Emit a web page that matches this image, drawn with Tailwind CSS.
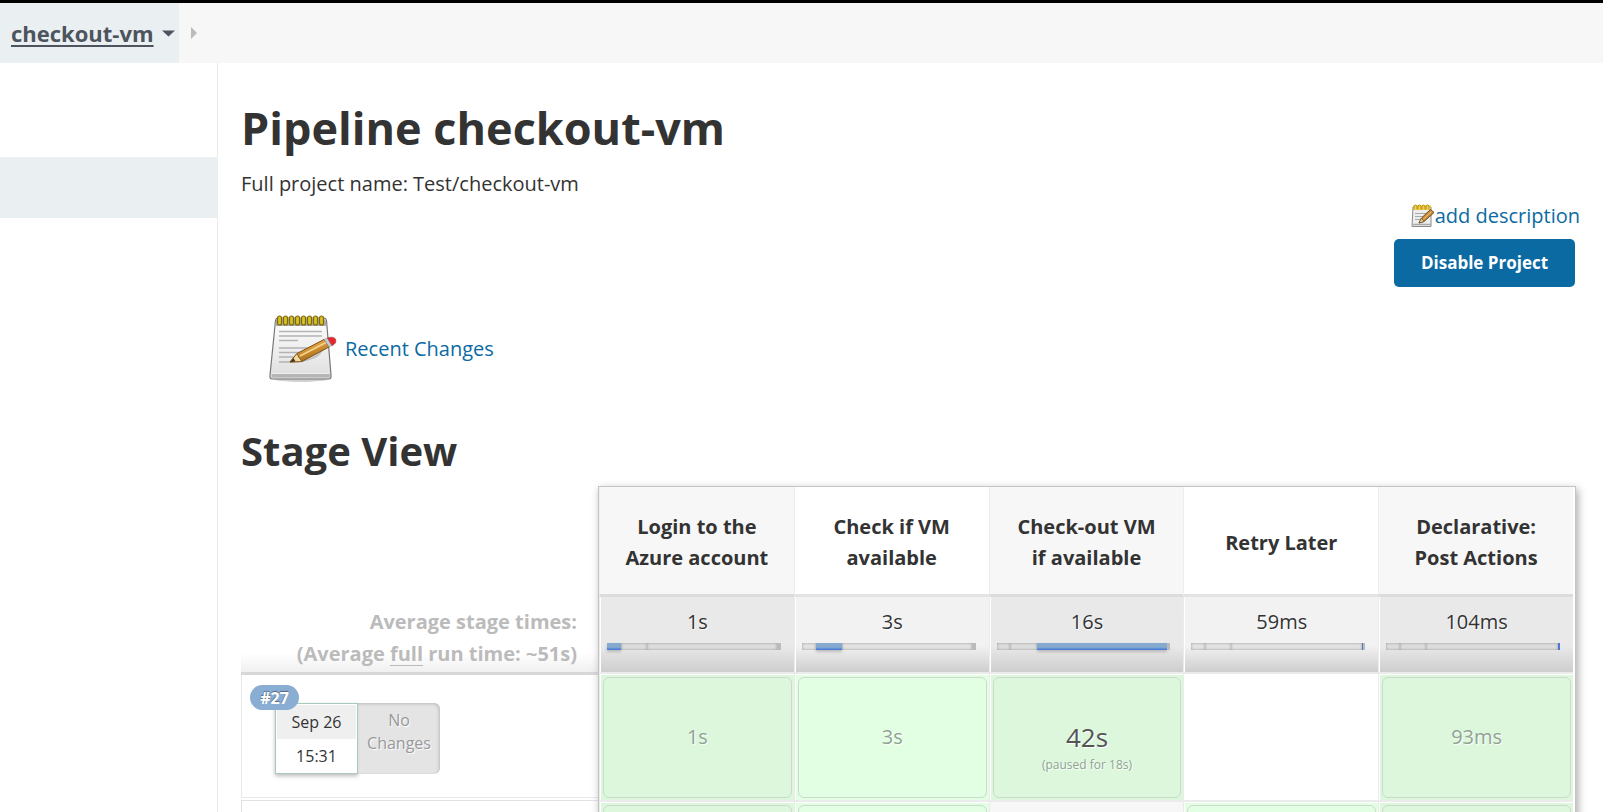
<!DOCTYPE html>
<html lang="en">
<head>
<meta charset="utf-8">
<title>checkout-vm</title>
<script src="https://cdn.jsdelivr.net/npm/@tailwindcss/browser@4"></script>
</head>
<body class="flex h-screen flex-col overflow-hidden bg-white font-['Segoe_UI','Open_Sans',sans-serif] text-[20px] text-[#333]">
<svg class="absolute size-0" aria-hidden="true">
  <defs>
    <linearGradient id="paper" x1="0" y1="0" x2="0" y2="1"><stop offset="0" stop-color="#fff"/><stop offset="1" stop-color="#dedede"/></linearGradient>
    <linearGradient id="wood" x1="0" y1="0" x2="0.5" y2="1"><stop offset="0" stop-color="#ecc06a"/><stop offset="0.5" stop-color="#d9993a"/><stop offset="1" stop-color="#9c6519"/></linearGradient>
    <symbol id="notepad" viewBox="0 0 68 68">
      <ellipse cx="32" cy="64" rx="27" ry="3" fill="#000" opacity=".18"/>
      <path d="M6.500 5.500Q7 3 9 3H55Q57 3 57.500 5.500L62 60Q62.500 64 60 64H3Q.5 64 1 60Z" fill="url(#paper)" stroke="#777" stroke-width="1.200"/>
      <path d="M7 5Q7 4 9 4H55Q57 4 57.500 11H6.500Z" fill="#aaa"/>
      <path d="M3 58H60.500L61 62.500H2.500Z" fill="#b5b5b5"/>
      <path d="M3 58.500H60.500" stroke="#eee"/>
      <path d="M10 16.500H53M10 21H53M10 25.500H29M10 33H39M10 37.500H32M10 42H27M10 47H22" stroke="#b3b3b3" stroke-width="1.300"/>
      <path d="M22 48Q45 45 54 34Q52 46 22 48Z" fill="#000" opacity=".18"/>
      <g fill="#d9c024" stroke="#7d6a08" stroke-width="1.200">
        <rect x="8.500" y="1" width="4" height="9" rx="2"/><rect x="14.500" y="1" width="4" height="9" rx="2"/><rect x="20.500" y="1" width="4" height="9" rx="2"/><rect x="26.500" y="1" width="4" height="9" rx="2"/><rect x="32.500" y="1" width="4" height="9" rx="2"/><rect x="38.500" y="1" width="4" height="9" rx="2"/><rect x="44.500" y="1" width="4" height="9" rx="2"/><rect x="50.500" y="1" width="4" height="9" rx="2"/>
      </g>
      <path d="M21 47L28 38.500L55 24.500L60 32L33 46.500Z" fill="url(#wood)" stroke="#7b5018" stroke-width="1"/>
      <path d="M21 47L28 38.500Q29 42 33 46.500Z" fill="#efd9a4" stroke="#7b5018" stroke-width=".8"/>
      <path d="M21 47L24.500 43L26.500 46.600Z" fill="#4a3510"/>
      <path d="M31 41L57 27.500" stroke="#f7d48a" stroke-width="1.500"/>
      <path d="M55 24.500L58.500 23L63 30.500L60 32Z" fill="#c9c9d2" stroke="#8d8d95" stroke-width=".6"/>
      <path d="M58.500 23Q64 21 66.500 24Q68 28.500 63 30.500Z" fill="#e8252c" stroke="#9b4340" stroke-width=".7"/>
    </symbol>
    <symbol id="notepad-small" viewBox="0 0 24 24">
      <path d="M2 3H20V22.500H1Z" fill="#eee" stroke="#8a8a8a"/>
      <path d="M1.500 20.500H20" stroke="#aaa" stroke-width="1.500"/>
      <path d="M4 9.500H16M4 12.500H12M4 15.500H9" stroke="#aaa"/>
      <path d="M2.500 1H19.500V6H2.500Z" fill="#f2d34c"/>
      <path d="M3 5.500V2Q4.500 0 6 2V5.500M7 5.500V2Q8.500 0 10 2V5.500M11 5.500V2Q12.500 0 14 2V5.500M15 5.500V2Q16.500 0 18 2V5.500" fill="none" stroke="#b4901c"/>
      <path d="M8 19L10.500 14L19.500 5.500L23 8.500L13 17.500Z" fill="#c98d3c" stroke="#6b4a1d"/>
      <path d="M8 19L10.500 14L13 17.500Z" fill="#ead6a8" stroke="#6b4a1d" stroke-width=".7"/>
      <path d="M12.500 15L20.500 7.500" stroke="#efc47a"/>
    </symbol>
  </defs>
</svg>

<header class="flex h-[63px] shrink-0 border-t-[3px] border-black bg-[#f7f7f7]">
  <nav class="flex items-center" aria-label="Breadcrumb">
    <div class="flex h-full items-center gap-2 bg-[#eaeff2] pr-1 pl-[11px]">
      <a href="#" class="text-[22px] font-bold text-[#4d545d] underline decoration-2 underline-offset-3">checkout-vm</a>
      <button type="button" aria-label="Open menu" class="flex"><svg class="h-[7px] w-[13px]" viewBox="0 0 13 7"><path d="M0 .5H13L6.500 6.500Z" fill="#4d545d"/></svg></button>
    </div>
    <svg class="ml-3 h-3 w-[6px]" viewBox="0 0 6 12"><path d="M0 0L6 6L0 12Z" fill="#bbb"/></svg>
  </nav>
</header>

<div class="flex min-h-0 flex-1">
  <aside class="w-[218px] shrink-0 border-r border-[#ebebeb] pt-[94px]">
    <div class="-mr-px h-[61px] bg-[#eaeff2]"></div>
  </aside>

  <main class="min-w-0 flex-1 pr-[27px] pl-[23px]">
    <h1 class="mt-[33px] text-[45px] leading-[64px] font-bold">Pipeline checkout-vm</h1>
    <p class="mt-[9px] leading-[30px]">Full project name: Test/checkout-vm</p>
    <div class="mt-[2px] -mr-1 flex items-center justify-end">
      <svg class="size-6" aria-hidden="true"><use href="#notepad-small"/></svg>
      <a href="#" class="leading-[30px] text-[#0b6aa2]">add description</a>
    </div>
    <div class="mt-2 mr-px flex justify-end">
      <button type="button" class="h-12 w-[181px] rounded-[5px] bg-[#0b6aa2] text-[17px] font-bold text-white">Disable Project</button>
    </div>

    <div class="mt-7 ml-7 flex items-center gap-2">
      <svg class="size-[68px]" aria-hidden="true"><use href="#notepad"/></svg>
      <a href="#" class="text-[#0b6aa2]">Recent Changes</a>
    </div>

    <h2 class="mt-10 text-[40px] leading-[56px] font-bold">Stage View</h2>

    <section class="mt-[7px] flex items-start" aria-label="Stage View">
      <table class="mt-[111px] w-[357px] shrink-0 border-separate border-spacing-0">
        <tbody>
          <tr>
            <th scope="row" class="h-[78px] border-b-3 border-[#d8d8d8] bg-linear-to-b from-white from-75% to-[#f0f0f0] px-[21px] pt-[6px] text-right leading-8 font-bold text-[#bbb]">Average stage times:<br>(Average <span class="underline decoration-1 underline-offset-4">full</span> run time: ~51s)</th>
          </tr>
          <tr>
            <td class="h-[123px] border-b border-l border-[#e8e8e8] p-0 pl-2 align-top">
              <div class="relative pt-[28px] pl-[25px] text-[16px]">
                <span class="absolute top-[10px] left-0 z-10 flex h-[25px] w-[49px] items-center justify-center rounded-full bg-[#8aadd3] font-bold text-white text-shadow-[0_-1px_1px_#567]">#27</span>
                <div class="flex">
                  <div class="h-[71px] w-[83px] border border-[#a9c9bb] bg-white p-px text-center shadow-[0_2px_4px_#bbb]">
                    <div class="h-[34px] bg-[#efefef] leading-[34px]">Sep 26</div>
                    <div class="leading-[34px]">15:31</div>
                  </div>
                  <div class="h-[71px] w-[82px] rounded-r-md bg-[#e4e4e4] pt-[6px] text-center leading-[23px] text-[#999] shadow-[inset_-1px_1px_3px_#bbb] text-shadow-[1px_1px_1px_#fff]">No<br>Changes</div>
                </div>
              </div>
            </td>
          </tr>
          <tr><td class="h-[3px] border-b border-[#e2e2e2] p-0"></td></tr>
          <tr><td class="h-[120px] border-l border-[#e2e2e2] p-0"></td></tr>
        </tbody>
      </table>

      <div class="min-w-0 flex-1 border border-[#c4c4c4] bg-white pr-[2px] shadow-[2px_3px_8px_#aaa]">
        <table class="w-full table-fixed border-separate border-spacing-0 text-center">
          <thead>
            <tr class="leading-[31px]">
              <th scope="col" class="h-[110px] border-b-3 border-l border-b-[#dcdcdc] border-l-[#f0f0f0] bg-[#f7f7f7] px-5 pt-[3px] font-bold">Login to the Azure account</th>
              <th scope="col" class="border-b-3 border-l border-b-[#e3e3e3] border-l-[#eee] px-5 pt-[3px] font-bold">Check if VM available</th>
              <th scope="col" class="border-b-3 border-l border-b-[#dcdcdc] border-l-[#eee] bg-[#f7f7f7] px-5 pt-[3px] font-bold">Check-out VM if available</th>
              <th scope="col" class="border-b-3 border-l border-b-[#e3e3e3] border-l-[#eee] px-5 pt-[3px] font-bold">Retry Later</th>
              <th scope="col" class="border-b-3 border-l border-b-[#dcdcdc] border-l-[#eee] bg-[#f7f7f7] px-5 pt-[3px] font-bold">Declarative: Post Actions</th>
            </tr>
          </thead>
          <tbody>
            <tr>
              <td class="border-b-2 border-l border-[#ebebeb] p-0 pl-px">
                <div class="h-[75px] bg-linear-to-b from-[#e9e9e9] from-65% to-[#cecece] pt-[10px] pr-[13px] pl-[6px]">
                  <div class="-mr-[7px] leading-[30px] text-shadow-[1px_1px_1px_#fff]">1s</div>
                  <div class="mt-[6px] flex h-[7px] bg-[#dedede]">
                    <div class="w-[8%] bg-linear-to-b from-[#85a9cf] from-60% to-[#3f73d4] shadow-[0_2px_3px_#bbb]"></div><div class="w-[15%] shadow-[inset_0_0_3px_#999]"></div><div class="w-[75%] shadow-[inset_0_0_3px_#999]"></div><div class="flex-1 bg-[#bbb]"></div>
                  </div>
                </div>
              </td>
              <td class="border-b-2 border-l border-[#ebebeb] p-0 pl-px">
                <div class="h-[75px] bg-linear-to-b from-[#f2f2f2] from-65% to-[#cecece] pt-[10px] pr-[13px] pl-[6px]">
                  <div class="-mr-[7px] leading-[30px] text-shadow-[1px_1px_1px_#fff]">3s</div>
                  <div class="mt-[6px] flex h-[7px] bg-[#e4e4e4]">
                    <div class="w-[8%] shadow-[inset_0_0_3px_#999]"></div><div class="w-[15%] bg-linear-to-b from-[#85a9cf] from-60% to-[#3f73d4] shadow-[0_2px_3px_#bbb]"></div><div class="w-[75%] shadow-[inset_0_0_3px_#999]"></div><div class="flex-1 bg-[#bbb]"></div>
                  </div>
                </div>
              </td>
              <td class="border-b-2 border-l border-[#ebebeb] p-0 pl-px">
                <div class="h-[75px] bg-linear-to-b from-[#e9e9e9] from-65% to-[#cecece] pt-[10px] pr-[13px] pl-[6px]">
                  <div class="-mr-[7px] leading-[30px] text-shadow-[1px_1px_1px_#fff]">16s</div>
                  <div class="mt-[6px] flex h-[7px] bg-[#dedede]">
                    <div class="w-[8%] shadow-[inset_0_0_3px_#999]"></div><div class="w-[15%] shadow-[inset_0_0_3px_#999]"></div><div class="w-[75%] bg-linear-to-b from-[#85a9cf] from-60% to-[#3f73d4] shadow-[0_2px_3px_#bbb]"></div><div class="flex-1 bg-[#bbb]"></div>
                  </div>
                </div>
              </td>
              <td class="border-b-2 border-l border-[#ebebeb] p-0 pl-px">
                <div class="h-[75px] bg-linear-to-b from-[#f2f2f2] from-65% to-[#cecece] pt-[10px] pr-[13px] pl-[6px]">
                  <div class="-mr-[7px] leading-[30px] text-shadow-[1px_1px_1px_#fff]">59ms</div>
                  <div class="mt-[6px] flex h-[7px] bg-[#e4e4e4]">
                    <div class="w-[8%] shadow-[inset_0_0_3px_#999]"></div><div class="w-[15%] shadow-[inset_0_0_3px_#999]"></div><div class="w-[75%] shadow-[inset_0_0_3px_#999]"></div><div class="w-px bg-[#4a7bd0]"></div><div class="flex-1 bg-[#bbb]"></div>
                  </div>
                </div>
              </td>
              <td class="border-b-2 border-l border-[#ebebeb] p-0 pl-px">
                <div class="h-[75px] bg-linear-to-b from-[#e9e9e9] from-65% to-[#cecece] pt-[10px] pr-[13px] pl-[6px]">
                  <div class="-mr-[7px] leading-[30px] text-shadow-[1px_1px_1px_#fff]">104ms</div>
                  <div class="mt-[6px] flex h-[7px] bg-[#dedede]">
                    <div class="w-[8%] shadow-[inset_0_0_3px_#999]"></div><div class="w-[15%] shadow-[inset_0_0_3px_#999]"></div><div class="flex-1 shadow-[inset_0_0_3px_#999]"></div><div class="w-[2px] bg-[#4a7bd0]"></div>
                  </div>
                </div>
              </td>
            </tr>
            <tr class="text-[#92a292] text-shadow-[1px_1px_1px_#fff]">
              <td class="border-b-2 border-l border-[#ebebeb] p-0 pt-px pl-px"><div class="h-[125px] bg-[#ddf7dd] p-[2px]"><div class="flex h-full items-center justify-center rounded-md border border-[#ccd9cc] pb-[2px]">1s</div></div></td>
              <td class="border-b-2 border-l border-[#ebebeb] p-0 pt-px pl-px"><div class="h-[125px] bg-[#e3ffe3] p-[2px]"><div class="flex h-full items-center justify-center rounded-md border border-[#ccd9cc] pb-[2px]">3s</div></div></td>
              <td class="border-b-2 border-l border-[#ebebeb] p-0 pt-px pl-px"><div class="h-[125px] bg-[#ddf7dd] p-[2px]"><div class="flex h-full flex-col items-center justify-center rounded-md border border-[#ccd9cc] pt-[20px]"><span class="text-[26px] leading-[34px] text-[#555]">42s</span><span class="text-[12px] leading-[22px]">(paused for 18s)</span></div></div></td>
              <td class="border-b-2 border-l border-[#ebebeb] p-0"></td>
              <td class="border-b-2 border-l border-[#ebebeb] p-0 pt-px pl-px"><div class="h-[125px] bg-[#ddf7dd] p-[2px]"><div class="flex h-full items-center justify-center rounded-md border border-[#ccd9cc] pb-[2px]">93ms</div></div></td>
            </tr>
            <tr>
              <td class="border-l border-[#ebebeb] p-0 pt-px pl-px"><div class="h-[125px] bg-[#ddf7dd] p-[2px]"><div class="h-full rounded-md border border-[#ccd9cc]"></div></div></td>
              <td class="border-l border-[#ebebeb] p-0 pt-px pl-px"><div class="h-[125px] bg-[#e3ffe3] p-[2px]"><div class="h-full rounded-md border border-[#ccd9cc]"></div></div></td>
              <td class="border-l border-[#ebebeb] bg-[#f7f7f7] p-0"></td>
              <td class="border-l border-[#ebebeb] p-0 pt-px pl-px"><div class="h-[125px] bg-[#e3ffe3] p-[2px]"><div class="h-full rounded-md border border-[#ccd9cc]"></div></div></td>
              <td class="border-l border-[#ebebeb] p-0 pt-px pl-px"><div class="h-[125px] bg-[#ddf7dd] p-[2px]"><div class="h-full rounded-md border border-[#ccd9cc]"></div></div></td>
            </tr>
          </tbody>
        </table>
      </div>
    </section>
  </main>
</div>
</body>
</html>
